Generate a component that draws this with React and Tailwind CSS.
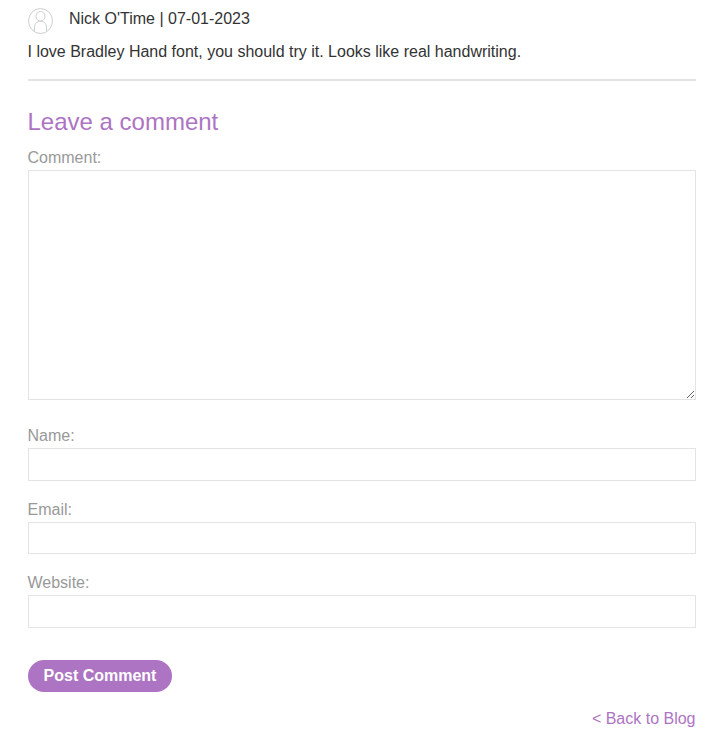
function Field({ label, height }) {
  return (
    <label className="block text-[#999]">
      <span className="block h-[23px] leading-[22px]">{label}</span>
      <input className={`block w-full border border-[#e4e4e4] bg-white outline-none ${height}`} />
    </label>
  );
}

export default function App() {
  return (
    <main className="h-[747px] overflow-hidden bg-white pl-[27.5px] pr-[13.5px] pt-[7px] font-['Liberation_Sans',Arial,sans-serif] text-[16px] text-[#333]">
      <div className="flex h-[28px] items-start">
        <svg width="26" height="28" viewBox="0 0 26 28" fill="none" stroke="#ccd0cf" className="mr-[15.5px] shrink-0">
          <ellipse cx="12.5" cy="14" rx="12" ry="12.5" />
          <ellipse cx="12.5" cy="9.3" rx="4.5" ry="4.8" />
          <path d="M6.5 25V20.2C6.5 12.2 18.5 12.2 18.5 20.2V25" />
        </svg>
        <span className="leading-[23px]">Nick O'Time | 07-01-2023</span>
      </div>
      <p className="mt-[5px] h-[41px] border-b-2 border-[#e4e4e4] leading-[23px]">
        I love Bradley Hand font, you should try it. Looks like real handwriting.
      </p>
      <h2 className="mt-[25px] h-[36px] text-[24px] leading-[32px] text-[#ad74c3]">Leave a comment</h2>
      <label className="mt-[4px] block text-[#999]">
        <span className="block h-[24px] leading-[23px]">Comment:</span>
        <textarea className="block h-[230px] w-full resize-y border border-[#e4e4e4] bg-white outline-none" />
      </label>
      <div className="mt-[25px]"><Field label="Name:" height="h-[33px]" /></div>
      <div className="mt-[18px]"><Field label="Email:" height="h-[32px]" /></div>
      <div className="mt-[18px]"><Field label="Website:" height="h-[33px]" /></div>
      <button className="ml-[0.5px] mt-[32px] block h-[32px] w-[144px] rounded-full bg-[#ad74c3] font-bold text-white">Post Comment</button>
      <a href="#" className="mt-[15px] block text-right leading-[23px] text-[#ad74c3]">&lt; Back to Blog</a>
    </main>
  );
}
